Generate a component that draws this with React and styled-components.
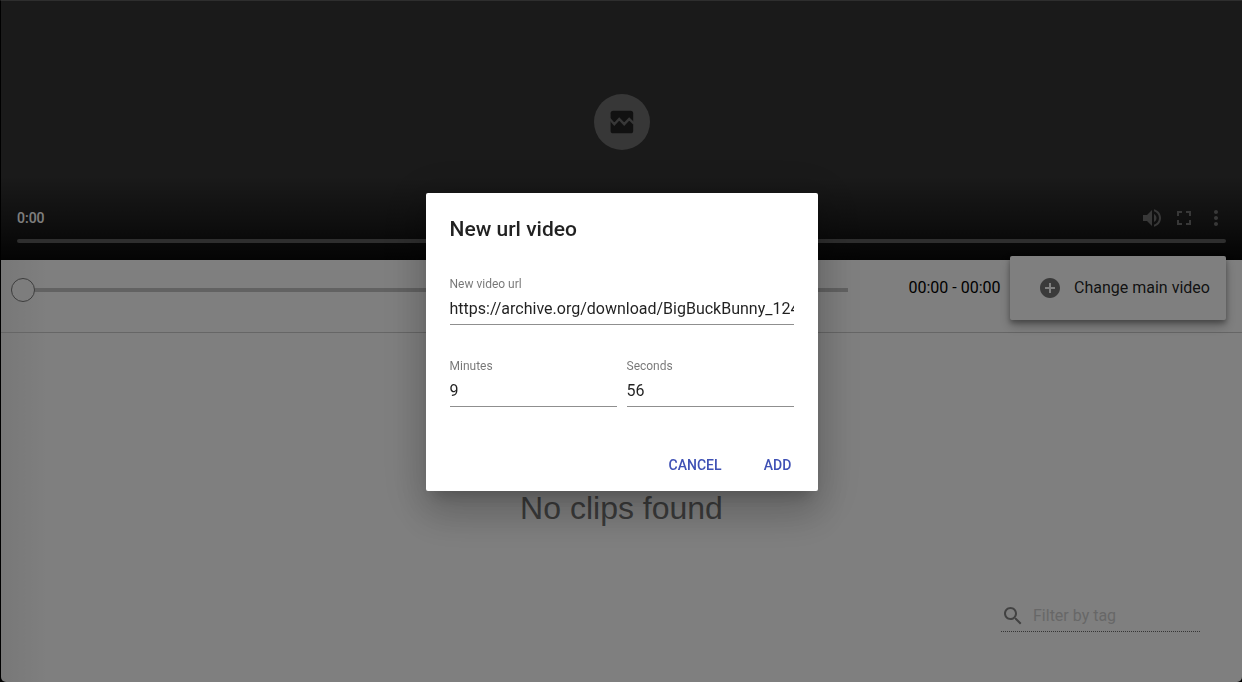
import React, { useState } from "react";
import styled, { createGlobalStyle } from "styled-components";

const GlobalStyle = createGlobalStyle`
  *, *::before, *::after { box-sizing: border-box; }
  body {
    margin: 0;
    background: #000;
    font-family: Roboto, "Helvetica Neue", "Liberation Sans", sans-serif;
    font-size: 16px;
    line-height: 24px;
    color: rgba(0, 0, 0, 0.87);
  }
  button, input { font: inherit; color: inherit; }
`;

const Window = styled.div`
  min-height: 100vh;
  display: flex;
  flex-direction: column;
  border-top: 1px solid #2e2e2e;
  border-left: 1px solid #000;
`;

const Page = styled.div`
  flex: 1;
  display: flex;
  flex-direction: column;
  background: linear-gradient(90deg, #f0f0f0, #fff 48px);
  border-radius: 0 0 5px 5px;
`;

const Player = styled.section`
  height: 259px;
  display: flex;
  flex-direction: column;
  background: linear-gradient(#343434 68%, #202020 84%, #080808);
`;

const PlayerStage = styled.div`
  flex: 1;
  display: flex;
  justify-content: center;
  padding-top: 93px;
`;

const PlayButton = styled.button`
  width: 56px;
  height: 56px;
  padding: 0;
  border: 0;
  border-radius: 50%;
  display: flex;
  align-items: center;
  justify-content: center;
  background: #6e6e6e;
`;

const PlayerControls = styled.div`
  display: flex;
  align-items: center;
  gap: 8px;
  padding: 0 14px 0 16px;
`;

const PlayerTime = styled.span`
  flex: 1;
  font-size: 14px;
  font-weight: 500;
  color: #fff;
`;

const IconButton = styled.button`
  width: 24px;
  height: 24px;
  padding: 0;
  border: 0;
  display: flex;
  background: none;
  color: #707070;
`;

const PlayerSeek = styled.input`
  appearance: none;
  display: block;
  height: 4px;
  margin: 9px 16px 17px;
  border-radius: 2px;
  background: #5c5c5c;
  &::-webkit-slider-thumb {
    appearance: none;
    width: 0;
    height: 0;
  }
`;

const Toolbar = styled.div`
  position: relative;
  height: 73px;
  display: flex;
  align-items: center;
  padding: 0 240px 12px 10px;
  border-bottom: 1px solid #ccc;
`;

const ClipRange = styled.input`
  appearance: none;
  flex: 1;
  min-width: 0;
  height: 24px;
  margin: 0 59px 0 0;
  background: none;
  &::-webkit-slider-runnable-track {
    height: 4px;
    background: #c4c4c4;
  }
  &::-webkit-slider-thumb {
    appearance: none;
    width: 24px;
    height: 24px;
    margin-top: -10px;
    border: 1px solid #7a7a7a;
    border-radius: 50%;
    background: #fbfbfb;
  }
`;

const ClipTime = styled.span`
  width: 95px;
  margin-bottom: 4px;
  color: #000;
  text-align: center;
  white-space: nowrap;
`;

const Menu = styled.div`
  position: absolute;
  top: -4px;
  right: 16px;
  padding: 8px 0;
  border-radius: 2px;
  background: #fff;
  box-shadow: 0 3px 5px rgba(0, 0, 0, 0.3), 0 6px 12px rgba(0, 0, 0, 0.24);
`;

const MenuItem = styled.button`
  width: 216px;
  height: 48px;
  padding: 0 16px 0 28px;
  border: 0;
  display: flex;
  align-items: center;
  gap: 12px;
  background: none;
  white-space: nowrap;
  svg { color: #757575; }
`;

const Clips = styled.main`
  flex: 1;
  display: grid;
  grid-template-rows: 1fr auto 1fr;
`;

const EmptyMessage = styled.h1`
  grid-row: 2;
  margin: 0;
  text-align: center;
  font-family: Helvetica, "Liberation Sans", sans-serif;
  font-size: 32px;
  line-height: 40px;
  font-weight: 400;
  color: #757575;
`;

const Filter = styled.label`
  grid-row: 3;
  justify-self: end;
  align-self: end;
  width: 199px;
  margin: 0 42px 50px 0;
  padding-bottom: 3px;
  display: flex;
  align-items: center;
  gap: 8px;
  border-bottom: 1px dotted #6b6b6b;
  svg { flex: none; color: #858585; }
`;

const FilterInput = styled.input`
  flex: 1;
  min-width: 0;
  padding: 0;
  border: 0;
  outline: 0;
  background: none;
  &::placeholder { color: #cfcfcf; opacity: 1; }
`;

const Backdrop = styled.div`
  position: fixed;
  inset: 1px 0 0 1px;
  display: flex;
  align-items: center;
  justify-content: center;
  background: rgba(0, 0, 0, 0.5);
`;

const Dialog = styled.form`
  width: 392px;
  max-width: 80vw;
  border-radius: 2px;
  background: #fff;
  box-shadow: 0 11px 15px -7px rgba(0, 0, 0, 0.2),
    0 24px 38px 3px rgba(0, 0, 0, 0.14), 0 9px 46px 8px rgba(0, 0, 0, 0.12);
`;

const DialogTitle = styled.h2`
  margin: 0;
  padding: 24px 24px 0;
  font-size: 21px;
  line-height: 24px;
  font-weight: 500;
`;

const DialogFields = styled.div`
  padding: 35px 24px 40px;
  display: grid;
  grid-template-columns: 1fr 1fr;
  gap: 33px 10px;
`;

const Field = styled.label`
  grid-column: ${(p) => (p.$wide ? "1 / -1" : "auto")};
  display: flex;
  flex-direction: column;
  min-width: 0;
  font-size: 12px;
  line-height: 16px;
  color: rgba(0, 0, 0, 0.54);
`;

const FieldInput = styled.input`
  width: 100%;
  height: 33px;
  padding: 2px 0 0;
  border: 0;
  border-bottom: 1px solid #8f8f8f;
  outline: 0;
  background: none;
  font-size: 16px;
  color: rgba(0, 0, 0, 0.87);
`;

const DialogActions = styled.div`
  display: flex;
  justify-content: flex-end;
  gap: 8px;
  padding: 0 8px 8px;
`;

const ActionButton = styled.button`
  min-width: 64px;
  height: 36px;
  padding: 0 16px;
  border: 0;
  border-radius: 2px;
  background: none;
  font-size: 14px;
  font-weight: 500;
  text-transform: uppercase;
  color: #3f51b5;
`;

const Icon = ({ d }) => (
  <svg width="24" height="24" viewBox="0 0 24 24" fill="currentColor" aria-hidden="true">
    <path d={d} />
  </svg>
);

const icons = {
  volume:
    "M3 9v6h4l5 5V4L7 9H3zm13.5 3c0-1.77-1.02-3.29-2.5-4.03v8.05c1.48-.73 2.5-2.25 2.5-4.02zM14 3.23v2.06c2.89.86 5 3.54 5 6.71s-2.11 5.85-5 6.71v2.06c4.01-.91 7-4.49 7-8.77s-2.99-7.86-7-8.77z",
  fullscreen: "M7 14H5v5h5v-2H7v-3zm-2-4h2V7h3V5H5v5zm12 7h-3v2h5v-5h-2v3zM14 5v2h3v3h2V5h-5z",
  more: "M12 8c1.1 0 2-.9 2-2s-.9-2-2-2-2 .9-2 2 .9 2 2 2zm0 2c-1.1 0-2 .9-2 2s.9 2 2 2 2-.9 2-2-.9-2-2-2zm0 6c-1.1 0-2 .9-2 2s.9 2 2 2 2-.9 2-2-.9-2-2-2z",
  add: "M12 2C6.48 2 2 6.48 2 12s4.48 10 10 10 10-4.48 10-10S17.52 2 12 2zm5 11h-4v4h-2v-4H7v-2h4V7h2v4h4v2z",
  search:
    "M15.5 14h-.79l-.28-.27C15.41 12.59 16 11.11 16 9.5 16 5.91 13.09 3 9.5 3S3 5.91 3 9.5 5.91 16 9.5 16c1.61 0 3.09-.59 4.23-1.57l.27.28v.79l5 4.99L20.49 19l-4.99-5zm-6 0C7.01 14 5 11.99 5 9.5S7.01 5 9.5 5 14 7.01 14 9.5 11.99 14 9.5 14z",
};

const BrokenVideoIcon = () => (
  <svg width="24" height="24" viewBox="0 0 24 24" aria-hidden="true">
    <rect x="0.6" y="0.7" width="22.6" height="22.6" rx="2.6" fill="#222" />
    <path d="M-0.5 8.7L4.3 14.2L9.2 9L14.2 14.2L19.2 9L24 13.6" fill="none" stroke="#6e6e6e" strokeWidth="2.4" />
  </svg>
);

export default function App() {
  const [url, setUrl] = useState(
    "https://archive.org/download/BigBuckBunny_124/Content/big_buck_bunny_720p_surround.mp4"
  );
  const [minutes, setMinutes] = useState("9");
  const [seconds, setSeconds] = useState("56");

  return (
    <>
      <GlobalStyle />
      <Window>
        <Page>
          <Player aria-label="Video player">
            <PlayerStage>
              <PlayButton type="button" aria-label="Play">
                <BrokenVideoIcon />
              </PlayButton>
            </PlayerStage>
            <PlayerControls>
              <PlayerTime>0:00</PlayerTime>
              <IconButton type="button" aria-label="Mute"><Icon d={icons.volume} /></IconButton>
              <IconButton type="button" aria-label="Full screen"><Icon d={icons.fullscreen} /></IconButton>
              <IconButton type="button" aria-label="More options"><Icon d={icons.more} /></IconButton>
            </PlayerControls>
            <PlayerSeek type="range" defaultValue="0" aria-label="Seek" />
          </Player>
          <Toolbar>
            <ClipRange type="range" defaultValue="0" aria-label="Clip range" />
            <ClipTime>00:00 - 00:00</ClipTime>
            <Menu>
              <MenuItem type="button">
                <Icon d={icons.add} />
                Change main video
              </MenuItem>
            </Menu>
          </Toolbar>
          <Clips>
            <EmptyMessage>No clips found</EmptyMessage>
            <Filter>
              <Icon d={icons.search} />
              <FilterInput type="text" placeholder="Filter by tag" aria-label="Filter by tag" />
            </Filter>
          </Clips>
        </Page>
      </Window>
      <Backdrop>
        <Dialog role="dialog" aria-labelledby="dialog-title" onSubmit={(e) => e.preventDefault()}>
          <DialogTitle id="dialog-title">New url video</DialogTitle>
          <DialogFields>
            <Field $wide>
              New video url
              <FieldInput value={url} onChange={(e) => setUrl(e.target.value)} />
            </Field>
            <Field>
              Minutes
              <FieldInput value={minutes} onChange={(e) => setMinutes(e.target.value)} />
            </Field>
            <Field>
              Seconds
              <FieldInput value={seconds} onChange={(e) => setSeconds(e.target.value)} />
            </Field>
          </DialogFields>
          <DialogActions>
            <ActionButton type="button">Cancel</ActionButton>
            <ActionButton type="submit">Add</ActionButton>
          </DialogActions>
        </Dialog>
      </Backdrop>
    </>
  );
}
